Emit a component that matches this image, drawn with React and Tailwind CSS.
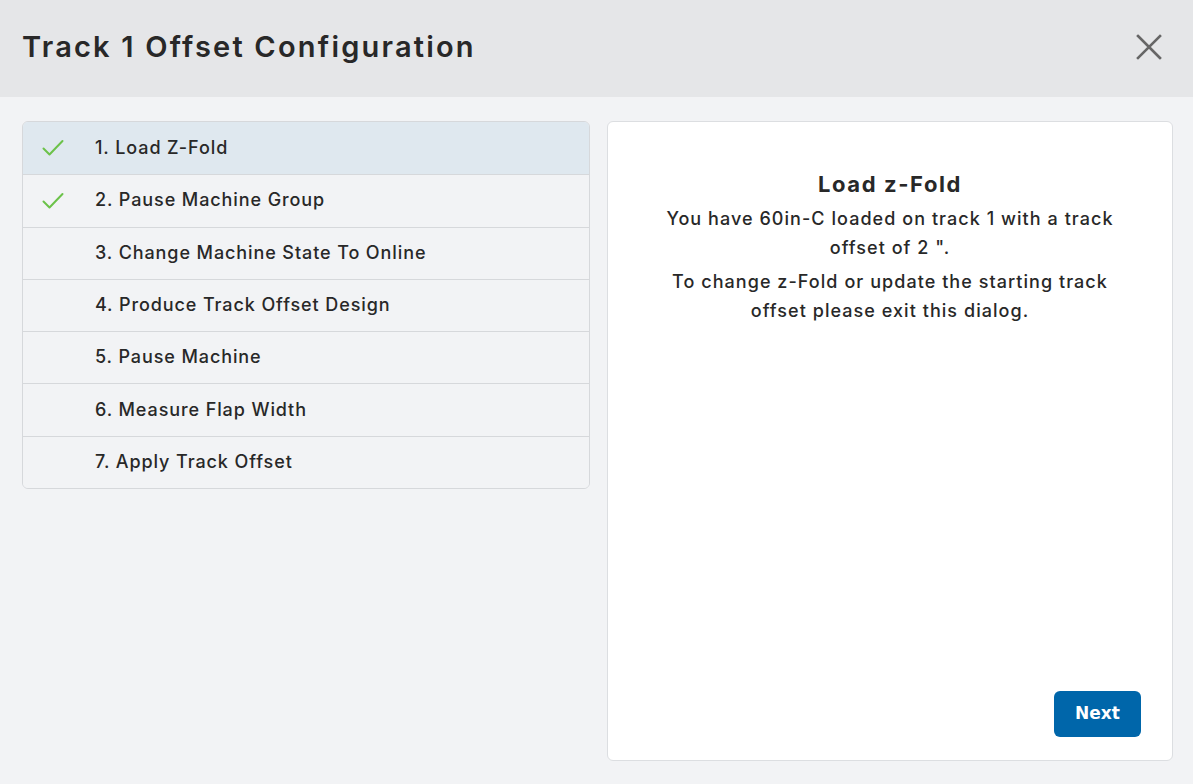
const steps = [
  { label: '1. Load Z-Fold', done: true, active: true },
  { label: '2. Pause Machine Group', done: true },
  { label: '3. Change Machine State To Online' },
  { label: '4. Produce Track Offset Design' },
  { label: '5. Pause Machine' },
  { label: '6. Measure Flap Width' },
  { label: '7. Apply Track Offset' },
];

function Check() {
  return (
    <svg width="22" height="18" viewBox="0 0 22 18" fill="none">
      <path d="M1.5 9.5 L7.5 15.5 L20.5 2" stroke="#6cc24a" strokeWidth="2" strokeLinecap="round" strokeLinejoin="round" />
    </svg>
  );
}

export default function App() {
  return (
    <div className="w-[1193px] h-[784px] flex flex-col bg-[#f2f3f5] text-[#282828] font-['Inter',sans-serif]">
      <div className="h-[97px] shrink-0 bg-[#e5e6e8] flex items-center justify-between pl-[22px] pr-[31px]">
        <h1 className="text-[29px] font-semibold tracking-[2.2px] text-[#282828] -mt-[3px]">Track 1 Offset Configuration</h1>
        <svg width="26" height="26" viewBox="0 0 26 26" className="-mt-[3px]">
          <path d="M2 2 L24 24 M24 2 L2 24" stroke="#666" strokeWidth="2.6" strokeLinecap="square" />
        </svg>
      </div>

      <div className="flex-1 flex gap-[17px] pl-[22px] pr-[20px] pt-[24px] pb-[23px]">
        <div className="w-[568px] self-start rounded-[6px] border border-[#d6d8db] overflow-hidden">
          {steps.map((s, i) => (
            <div
              key={i}
              className={`h-[52.3px] flex items-center ${i > 0 ? 'border-t border-[#d6d8db]' : ''} ${s.active ? 'bg-[#dfe8ef]' : 'bg-[#f2f3f5]'}`}
            >
              <div className="w-[72px] pl-[19px] flex items-center">{s.done && <Check />}</div>
              <span className="text-[18px] font-medium tracking-[0.9px] -mt-[2px]">{s.label}</span>
            </div>
          ))}
        </div>

        <div className="flex-1 bg-white rounded-[6px] border border-[#dcdee1] flex flex-col items-center pt-[46px] pb-[23px] pr-[31px]">
          <div className="w-[462px] ml-[31px] text-center">
            <h2 className="text-[22px] font-bold tracking-[1.6px] leading-[32px] mb-[4px]">Load z-Fold</h2>
            <p className="text-[18px] font-medium tracking-[1.05px] leading-[29px]">You have 60in-C loaded on track 1 with a track offset of 2 ".</p>
            <p className="text-[18px] font-medium tracking-[1.05px] leading-[29px] mt-[5px]">To change z-Fold or update the starting track offset please exit this dialog.</p>
          </div>
          <div className="flex-1" />
          <button className="self-end w-[87px] h-[46px] rounded-[6px] bg-[#0066aa] text-white text-[17px] font-bold font-['DejaVu_Sans',sans-serif]">Next</button>
        </div>
      </div>
    </div>
  );
}
